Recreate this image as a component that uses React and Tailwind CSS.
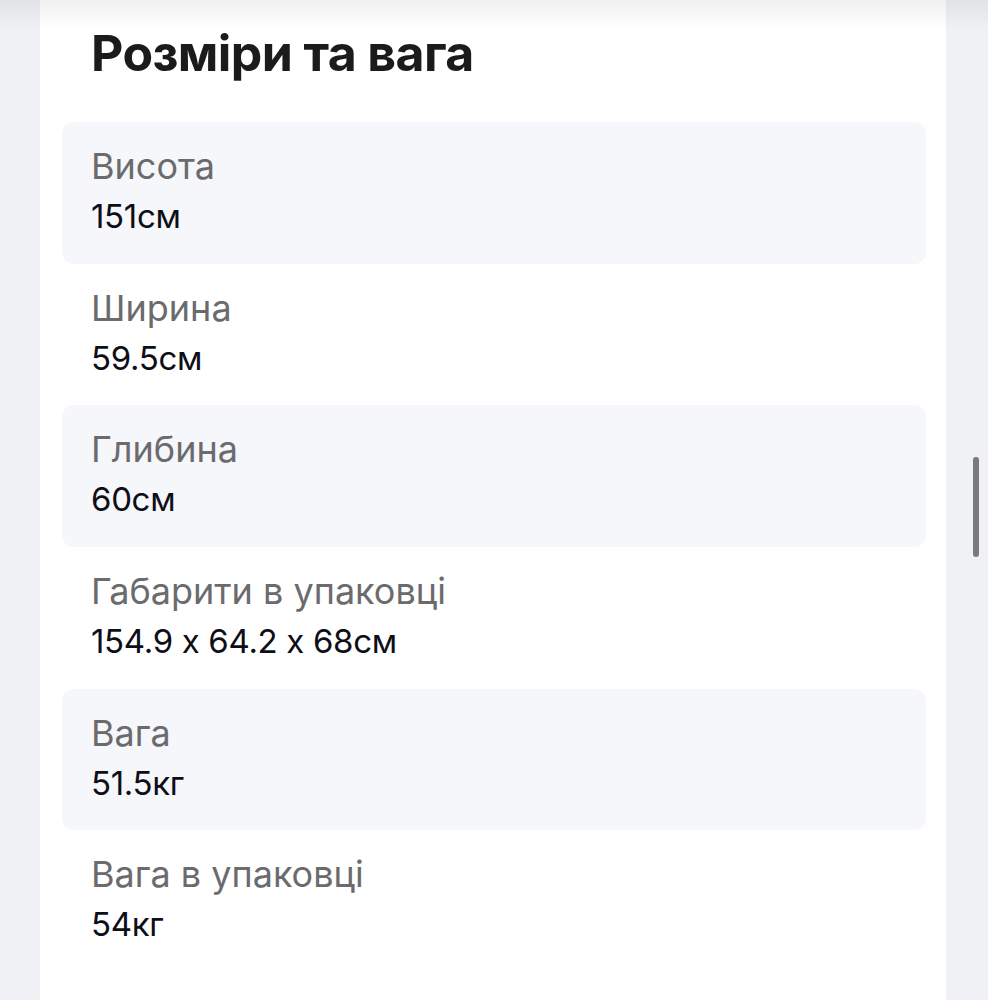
import React from "react";

const specs = [
  { label: "Висота", value: "151см" },
  { label: "Ширина", value: "59.5см" },
  { label: "Глибина", value: "60см" },
  { label: "Габарити в упаковці", value: "154.9 x 64.2 x 68см" },
  { label: "Вага", value: "51.5кг" },
  { label: "Вага в упаковці", value: "54кг" },
];

const SpecRow = ({ label, value, shaded }) => (
  <div
    className={`h-[141.67px] rounded-[12px] px-[29px] pt-[26px] ${
      shaded ? "bg-[#f6f7fa]" : "bg-white"
    }`}
  >
    <div className="text-[36px] leading-[36px] text-[#6b6b6e]">{label}</div>
    <div className="mt-[16px] text-[33px] leading-[33px] tracking-[-0.01em] text-[#0e0e18]">
      {value}
    </div>
  </div>
);

export default function App() {
  return (
    <div
      className="relative flex h-[1000px] w-full overflow-hidden bg-[#f0f1f4]"
      style={{ fontFamily: "Inter, 'Noto Sans', sans-serif" }}
    >
      <div className="pointer-events-none absolute left-0 right-0 top-0 h-[30px] bg-gradient-to-b from-black/[0.06] to-transparent" />

      <div className="w-[40px] shrink-0" />

      {/* Card */}
      <div className="w-[906px] shrink-0 bg-white pl-[22px] pr-[20px]">
        <h2 className="h-[122px] pl-[29px] pt-[28px] text-[50px] font-bold leading-[50px] tracking-[-0.012em] text-[#1b1b1b]">
          Розміри та вага
        </h2>
        <div className="flex flex-col">
          {specs.map((s, i) => (
            <SpecRow key={s.label} label={s.label} value={s.value} shaded={i % 2 === 0} />
          ))}
        </div>
      </div>

      {/* Scrollbar gutter */}
      <div className="flex-1 pl-[27px] pt-[457px]">
        <div className="h-[100px] w-[6px] rounded-full bg-[#7a7a7c]" />
      </div>
    </div>
  );
}
